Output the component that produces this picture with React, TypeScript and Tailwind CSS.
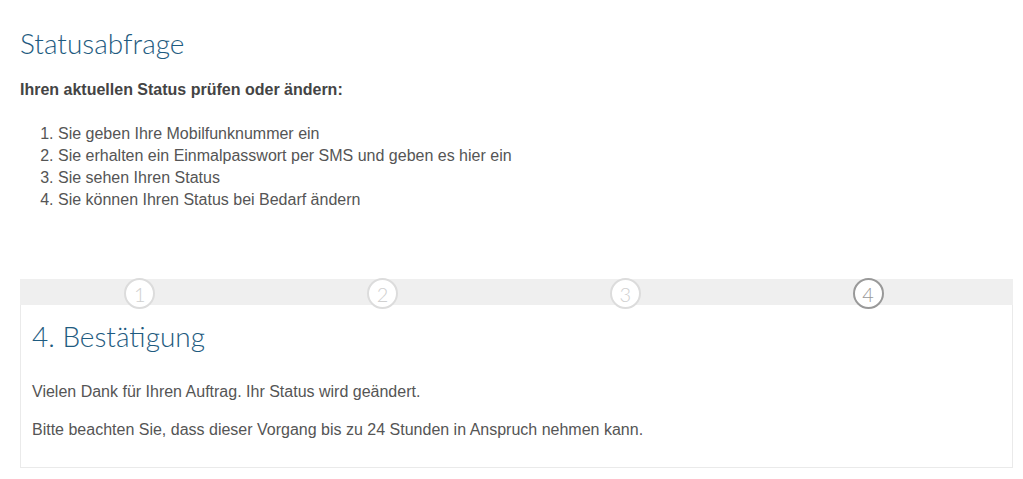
import React from "react";

const steps = ["1", "2", "3", "4"];

export default function App() {
  return (
    <div className="bg-white min-h-screen px-[20px] pt-[24px]" style={{ fontFamily: '"Liberation Sans", Arial, sans-serif' }}>
      <h1 className="text-[28px] leading-[38px] font-light text-[#1e5b80]" style={{ fontFamily: 'Lato, "Open Sans", sans-serif' }}>
        Statusabfrage
      </h1>
      <p className="mt-[17px] text-[16px] leading-[22px] font-bold text-[#444]">Ihren aktuellen Status prüfen oder ändern:</p>
      <ol className="mt-[22px] list-decimal pl-[38px] text-[16px] leading-[22px] text-[#555]">
        <li>Sie geben Ihre Mobilfunknummer ein</li>
        <li>Sie erhalten ein Einmalpasswort per SMS und geben es hier ein</li>
        <li>Sie sehen Ihren Status</li>
        <li>Sie können Ihren Status bei Bedarf ändern</li>
      </ol>
      <div className="mt-[68px] w-[993px]">
        <div className="h-[26px] bg-[#efefef] grid grid-cols-4 pr-[22px]">
          {steps.map((s, i) => (
            <div key={s} className="flex justify-center items-center">
              <div
                className={
                  "w-[31px] h-[31px] mt-[-1px] rounded-full bg-white border-2 flex items-center justify-center text-[20px] leading-none ml-[-3px] " +
                  (i === 3 ? "border-[#999] text-[#999]" : "border-[#dcdcdc] text-[#d0d0d0]")
                }
                style={{ fontFamily: 'Lato, "Open Sans", sans-serif', fontWeight: 300 }}
              >
                {s}
              </div>
            </div>
          ))}
        </div>
        <div className="border border-t-0 border-[#eaeaea] px-[11px] pt-[12px] pb-[26px]">
          <h2 className="text-[28px] leading-[38px] font-light text-[#1e5b80]" style={{ fontFamily: 'Lato, "Open Sans", sans-serif' }}>
            4. Bestätigung
          </h2>
          <p className="mt-[26px] text-[16px] leading-[22px] text-[#555]">Vielen Dank für Ihren Auftrag. Ihr Status wird geändert.</p>
          <p className="mt-[16px] text-[16px] leading-[22px] text-[#555]">Bitte beachten Sie, dass dieser Vorgang bis zu 24 Stunden in Anspruch nehmen kann.</p>
        </div>
      </div>
    </div>
  );
}
